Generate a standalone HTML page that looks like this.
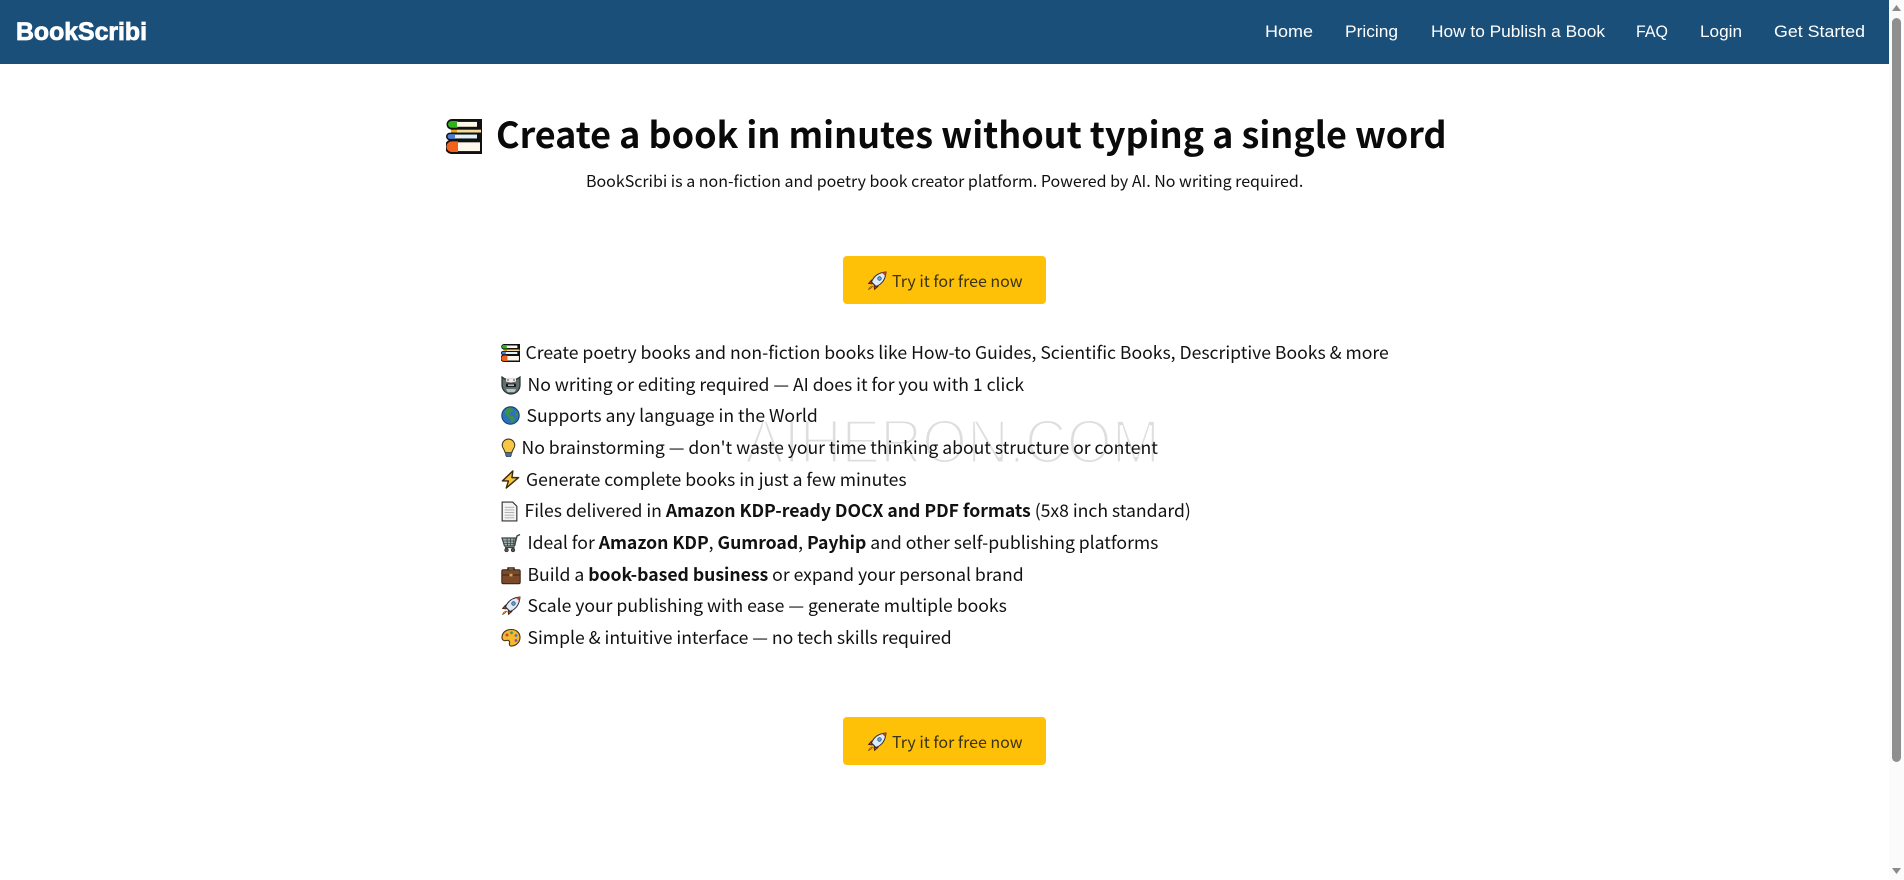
<!DOCTYPE html>
<html lang="en"><head><meta charset="utf-8"><title>BookScribi</title>
<style>
html,body{margin:0;padding:0;width:1904px;height:880px;overflow:hidden;background:#fff}
body{position:relative;font-family:"Noto Sans CJK JP","Liberation Sans",sans-serif;color:#111}
.t{position:absolute;height:0;line-height:0;white-space:nowrap}
.l{font-size:17.6px;letter-spacing:-.012px}
.l b{font-weight:700}
.i{position:absolute}
.btn{position:absolute;left:843px;width:203px;height:48px;background:#ffc107;border-radius:4px}
.bt{font-size:16px;color:#3b3312;left:892px}
</style></head><body>
<svg width="0" height="0" style="position:absolute">
<defs>
<symbol id="books" viewBox="0 0 36 36" preserveAspectRatio="none">
<path d="M6 0h30v11H6a5.500 5.500 0 0 1 0-11z" fill="#111"/><path d="M5.500 2h6v7h-6a3.500 3.500 0 0 1 0-7z" fill="#2fb21a"/><rect x="11" y="3" width="20" height="5" fill="#fff8e6"/>
<path d="M5 10h31v5H5z" fill="#111"/><rect x="5" y="11" width="6" height="3" fill="#e9a31f"/><rect x="11" y="11" width="24" height="3" fill="#f5dc9a"/>
<path d="M4 14h32v8H4a4 4 0 0 1 0-8z" fill="#111"/><path d="M4 15.500h5v5H4a2.500 2.500 0 0 1 0-5z" fill="#4a7fd8"/><rect x="9" y="16" width="22" height="4" fill="#dff3fb"/>
<path d="M6 21h30v15H6a7 7 0 0 1-7-7.500A7 7 0 0 1 6 21z" fill="#111"/><path d="M6 23h6v11H6a5.500 5.500 0 0 1 0-11z" fill="#f2621a"/><rect x="12" y="24" width="22" height="9" fill="#fff6ec"/>
</symbol>
<symbol id="robot" viewBox="0 0 20 20">
<path d="M1 2l3 2h12l3-2v8c0 5-4 9-9 9s-9-4-9-9z" fill="#5f6f70" stroke="#26302f" stroke-width="1.200"/>
<path d="M5 3.500h10v3l-5 1-5-1z" fill="#eee"/><circle cx="7" cy="5" r=".9" fill="#c33"/><circle cx="13" cy="5" r=".9" fill="#c33"/>
<rect x="5" y="8.500" width="10" height="3.500" rx=".8" fill="#161a1a"/><rect x="7" y="9.500" width="6" height="1.300" fill="#ddd"/>
<path d="M5 14h10l-1.500 3h-7z" fill="#b9c3c2"/>
</symbol>
<symbol id="globe" viewBox="0 0 20 20">
<circle cx="10" cy="10" r="9.200" fill="#2a72bd" stroke="#12395f" stroke-width="1"/>
<path d="M7 2c3 0 5 1 6 3-1 2-3 1-4 3s2 2 4 3 2 3 0 6c-2 1-3 0-3-2s-2-2-3-4-3-2-3-4 1-4 3-5z" fill="#3f8f4a"/>
<path d="M15 5l3 3 0 4-3-2z" fill="#3f8f4a"/>
</symbol>
<symbol id="bulb" viewBox="0 0 16 20">
<path d="M8 1a6.700 6.700 0 0 0-6.700 6.700c0 3 2.700 4.500 3.200 8h7c.5-3.500 3.200-5 3.200-8A6.700 6.700 0 0 0 8 1z" fill="#f7c744" stroke="#3c3320" stroke-width="1.100"/>
<path d="M5 15.500h6V18a2 1.500 0 0 1-6 0z" fill="#4a6f9c" stroke="#26354a" stroke-width=".8"/>
</symbol>
<symbol id="bolt" viewBox="0 0 20 20">
<path d="M12.500 1L1.500 11.500h6.300L5.500 19 18.500 8h-7z" fill="#f9c23c" stroke="#3a2c12" stroke-width="1.500" stroke-linejoin="round"/>
</symbol>
<symbol id="page" viewBox="0 0 16 20">
<path d="M1 1h10l4 4v14H1z" fill="#f3f3f1" stroke="#333" stroke-width="1.100"/>
<path d="M3.500 6h9M3.500 8.500h9M3.500 11h9M3.500 13.500h9M3.500 16h9" stroke="#aaa" stroke-width=".9"/>
</symbol>
<symbol id="cart" viewBox="0 0 20 20">
<path d="M1 5h14l-1.500 8H3.500z" fill="#9fb0ae" stroke="#3a4645" stroke-width="1.200"/>
<path d="M2.500 8h12M3 10.500h11M6 5.500l.5 7.500M9.500 5.500V13M13 5.500L12 13" stroke="#3a4645" stroke-width=".8"/>
<path d="M13.500 13l2.500-10 3-1.500" fill="none" stroke="#3a4645" stroke-width="1.400"/>
<path d="M4 14.500h9.500" stroke="#3a4645" stroke-width="1.300"/>
<circle cx="5.500" cy="17" r="1.800" fill="#555" stroke="#222" stroke-width=".7"/><circle cx="12" cy="17" r="1.800" fill="#555" stroke="#222" stroke-width=".7"/>
</symbol>
<symbol id="case" viewBox="0 0 20 20">
<path d="M7 5V3h6v2" fill="none" stroke="#3a2416" stroke-width="1.500"/>
<rect x=".8" y="4.800" width="18.400" height="14" rx="1.500" fill="#7a4a2a" stroke="#33200f" stroke-width="1"/>
<path d="M1 10h18" stroke="#4a2c18" stroke-width="1.200"/><rect x="8.500" y="8.800" width="3" height="2.600" fill="#d8a25a"/>
</symbol>
<symbol id="rocket" viewBox="0 0 20 20">
<path d="M1.500 12.500l3-3.500 3 .5-2.500 3.500z" fill="#c0391f" stroke="#3a1a12" stroke-width=".8"/>
<path d="M7.500 18.500l3.500-3-.5-3-3.500 2.500z" fill="#c0391f" stroke="#3a1a12" stroke-width=".8"/>
<path d="M4.500 11C7 4.500 12 1.500 19 1c-.5 7-3.500 12-10 14.500z" fill="#dcebf5" stroke="#2a2a3a" stroke-width="1"/>
<path d="M15 1.800L18.200 5c.4-1.300.6-2.600.8-4-1.400.2-2.800.4-4 .8z" fill="#d33f22"/>
<circle cx="12.500" cy="7.500" r="1.800" fill="#5aa7e0" stroke="#2a2a3a" stroke-width=".6"/>
<path d="M5 15c-1.500.5-3 2-3.500 3.500C3 18 4.500 17 5.500 15.500z" fill="#f3a32b" stroke="#6a3a12" stroke-width=".6"/>
</symbol>
<symbol id="palette" viewBox="0 0 20 20">
<path d="M10 1.500C4.500 1.500 1 5 1 9.500c0 3 2.500 3.500 4.500 3s3.500.5 3 2.500.5 3.500 2.500 3c4.500-.5 8-4 8-8.500 0-4.500-3.500-8-8.500-8z" fill="#f5b82e" stroke="#4a3312" stroke-width="1.100"/>
<circle cx="6" cy="7" r="1.500" fill="#d8402c"/><circle cx="10.500" cy="4.800" r="1.400" fill="#3f9a4a"/><circle cx="15" cy="7.500" r="1.400" fill="#3f78c9"/><circle cx="15" cy="12.500" r="1.400" fill="#8a4ac0"/>
</symbol>
</defs></svg>

<div style="position:absolute;left:0;top:0;width:1889px;height:64px;background:#1a4f7a"></div>
<svg style="position:absolute;left:0;top:0" width="1889" height="64" font-family="'Liberation Sans',sans-serif" fill="#fff">
<text x="16" y="40" font-size="25" font-weight="700" stroke="#fff" stroke-width=".8" textLength="131" lengthAdjust="spacingAndGlyphs">BookScribi</text>
<g font-size="17">
<text x="1265" y="37" textLength="48" lengthAdjust="spacingAndGlyphs">Home</text>
<text x="1345" y="37" textLength="53" lengthAdjust="spacingAndGlyphs">Pricing</text>
<text x="1431" y="37" textLength="174" lengthAdjust="spacingAndGlyphs">How to Publish a Book</text>
<text x="1636" y="37" textLength="32" lengthAdjust="spacingAndGlyphs">FAQ</text>
<text x="1700" y="37" textLength="42" lengthAdjust="spacingAndGlyphs">Login</text>
<text x="1774" y="37" textLength="91" lengthAdjust="spacingAndGlyphs">Get Started</text>
</g></svg>

<svg style="position:absolute;left:0;top:0" width="1889" height="880"><text x="745" y="463" font-family="'Liberation Sans',sans-serif" font-size="62" fill="#dedede" stroke="#fff" stroke-width="3" textLength="415" lengthAdjust="spacingAndGlyphs">AIHERON.COM</text></svg>

<svg class="i" style="left:446px;top:119px" width="36" height="35"><use href="#books"/></svg>
<div class="t" style="left:496px;top:133px;font-size:36px;font-weight:700;letter-spacing:-.045px;color:#0a0a0a">Create a book in minutes without typing a single word</div>
<div class="t" style="left:586px;top:180px;font-size:16px;letter-spacing:-.012px">BookScribi is a non-fiction and poetry book creator platform. Powered by AI. No writing required.</div>

<div class="btn" style="top:256px"></div>
<svg class="i" style="left:867px;top:271px" width="20" height="20"><use href="#rocket"/></svg>
<div class="t bt" style="top:280px">Try it for free now</div>

<svg class="i" style="left:501px;top:344px" width="19" height="18"><use href="#books"/></svg>
<div class="t l" style="left:525.500px;top:353px">Create poetry books and non-fiction books like How-to Guides, Scientific Books, Descriptive Books &amp; more</div>
<svg class="i" style="left:501px;top:375px" width="20" height="20"><use href="#robot"/></svg>
<div class="t l" style="left:527.500px;top:385px">No writing or editing required — AI does it for you with 1 click</div>
<svg class="i" style="left:501px;top:406px" width="19" height="19"><use href="#globe"/></svg>
<div class="t l" style="left:526.500px;top:416px">Supports any language in the World</div>
<svg class="i" style="left:501px;top:438px" width="15" height="19"><use href="#bulb"/></svg>
<div class="t l" style="left:521.500px;top:448px">No brainstorming — don't waste your time thinking about structure or content</div>
<svg class="i" style="left:501px;top:470px" width="19" height="19"><use href="#bolt"/></svg>
<div class="t l" style="left:526px;top:480px">Generate complete books in just a few minutes</div>
<svg class="i" style="left:501px;top:501px" width="17" height="21"><use href="#page"/></svg>
<div class="t l" style="left:524.500px;top:511px">Files delivered in <b>Amazon KDP-ready DOCX and PDF formats</b> (5x8 inch standard)</div>
<svg class="i" style="left:501px;top:533px" width="20" height="20"><use href="#cart"/></svg>
<div class="t l" style="left:527.500px;top:543px">Ideal for <b>Amazon KDP</b>, <b>Gumroad</b>, <b>Payhip</b> and other self-publishing platforms</div>
<svg class="i" style="left:501px;top:565px" width="20" height="20"><use href="#case"/></svg>
<div class="t l" style="left:527.500px;top:575px">Build a <b>book-based business</b> or expand your personal brand</div>
<svg class="i" style="left:501px;top:596px" width="20" height="20"><use href="#rocket"/></svg>
<div class="t l" style="left:527.500px;top:606px">Scale your publishing with ease — generate multiple books</div>
<svg class="i" style="left:501px;top:628px" width="20" height="20"><use href="#palette"/></svg>
<div class="t l" style="left:527.500px;top:638px">Simple &amp; intuitive interface — no tech skills required</div>

<div class="btn" style="top:717px"></div>
<svg class="i" style="left:867px;top:732px" width="20" height="20"><use href="#rocket"/></svg>
<div class="t bt" style="top:741px">Try it for free now</div>

<div style="position:absolute;left:1889px;top:0;width:15px;height:880px;background:#fbfbfb"></div>
<div style="position:absolute;left:1892px;top:18px;width:9px;height:744px;background:#8f8f8f;border-radius:5px"></div>
<svg style="position:absolute;left:1889px;top:0" width="15" height="880"><path d="M3 11h9L7.500 5z" fill="#8a8a8a"/><path d="M3 868h9l-4.500 6z" fill="#8a8a8a"/></svg>
</body></html>
